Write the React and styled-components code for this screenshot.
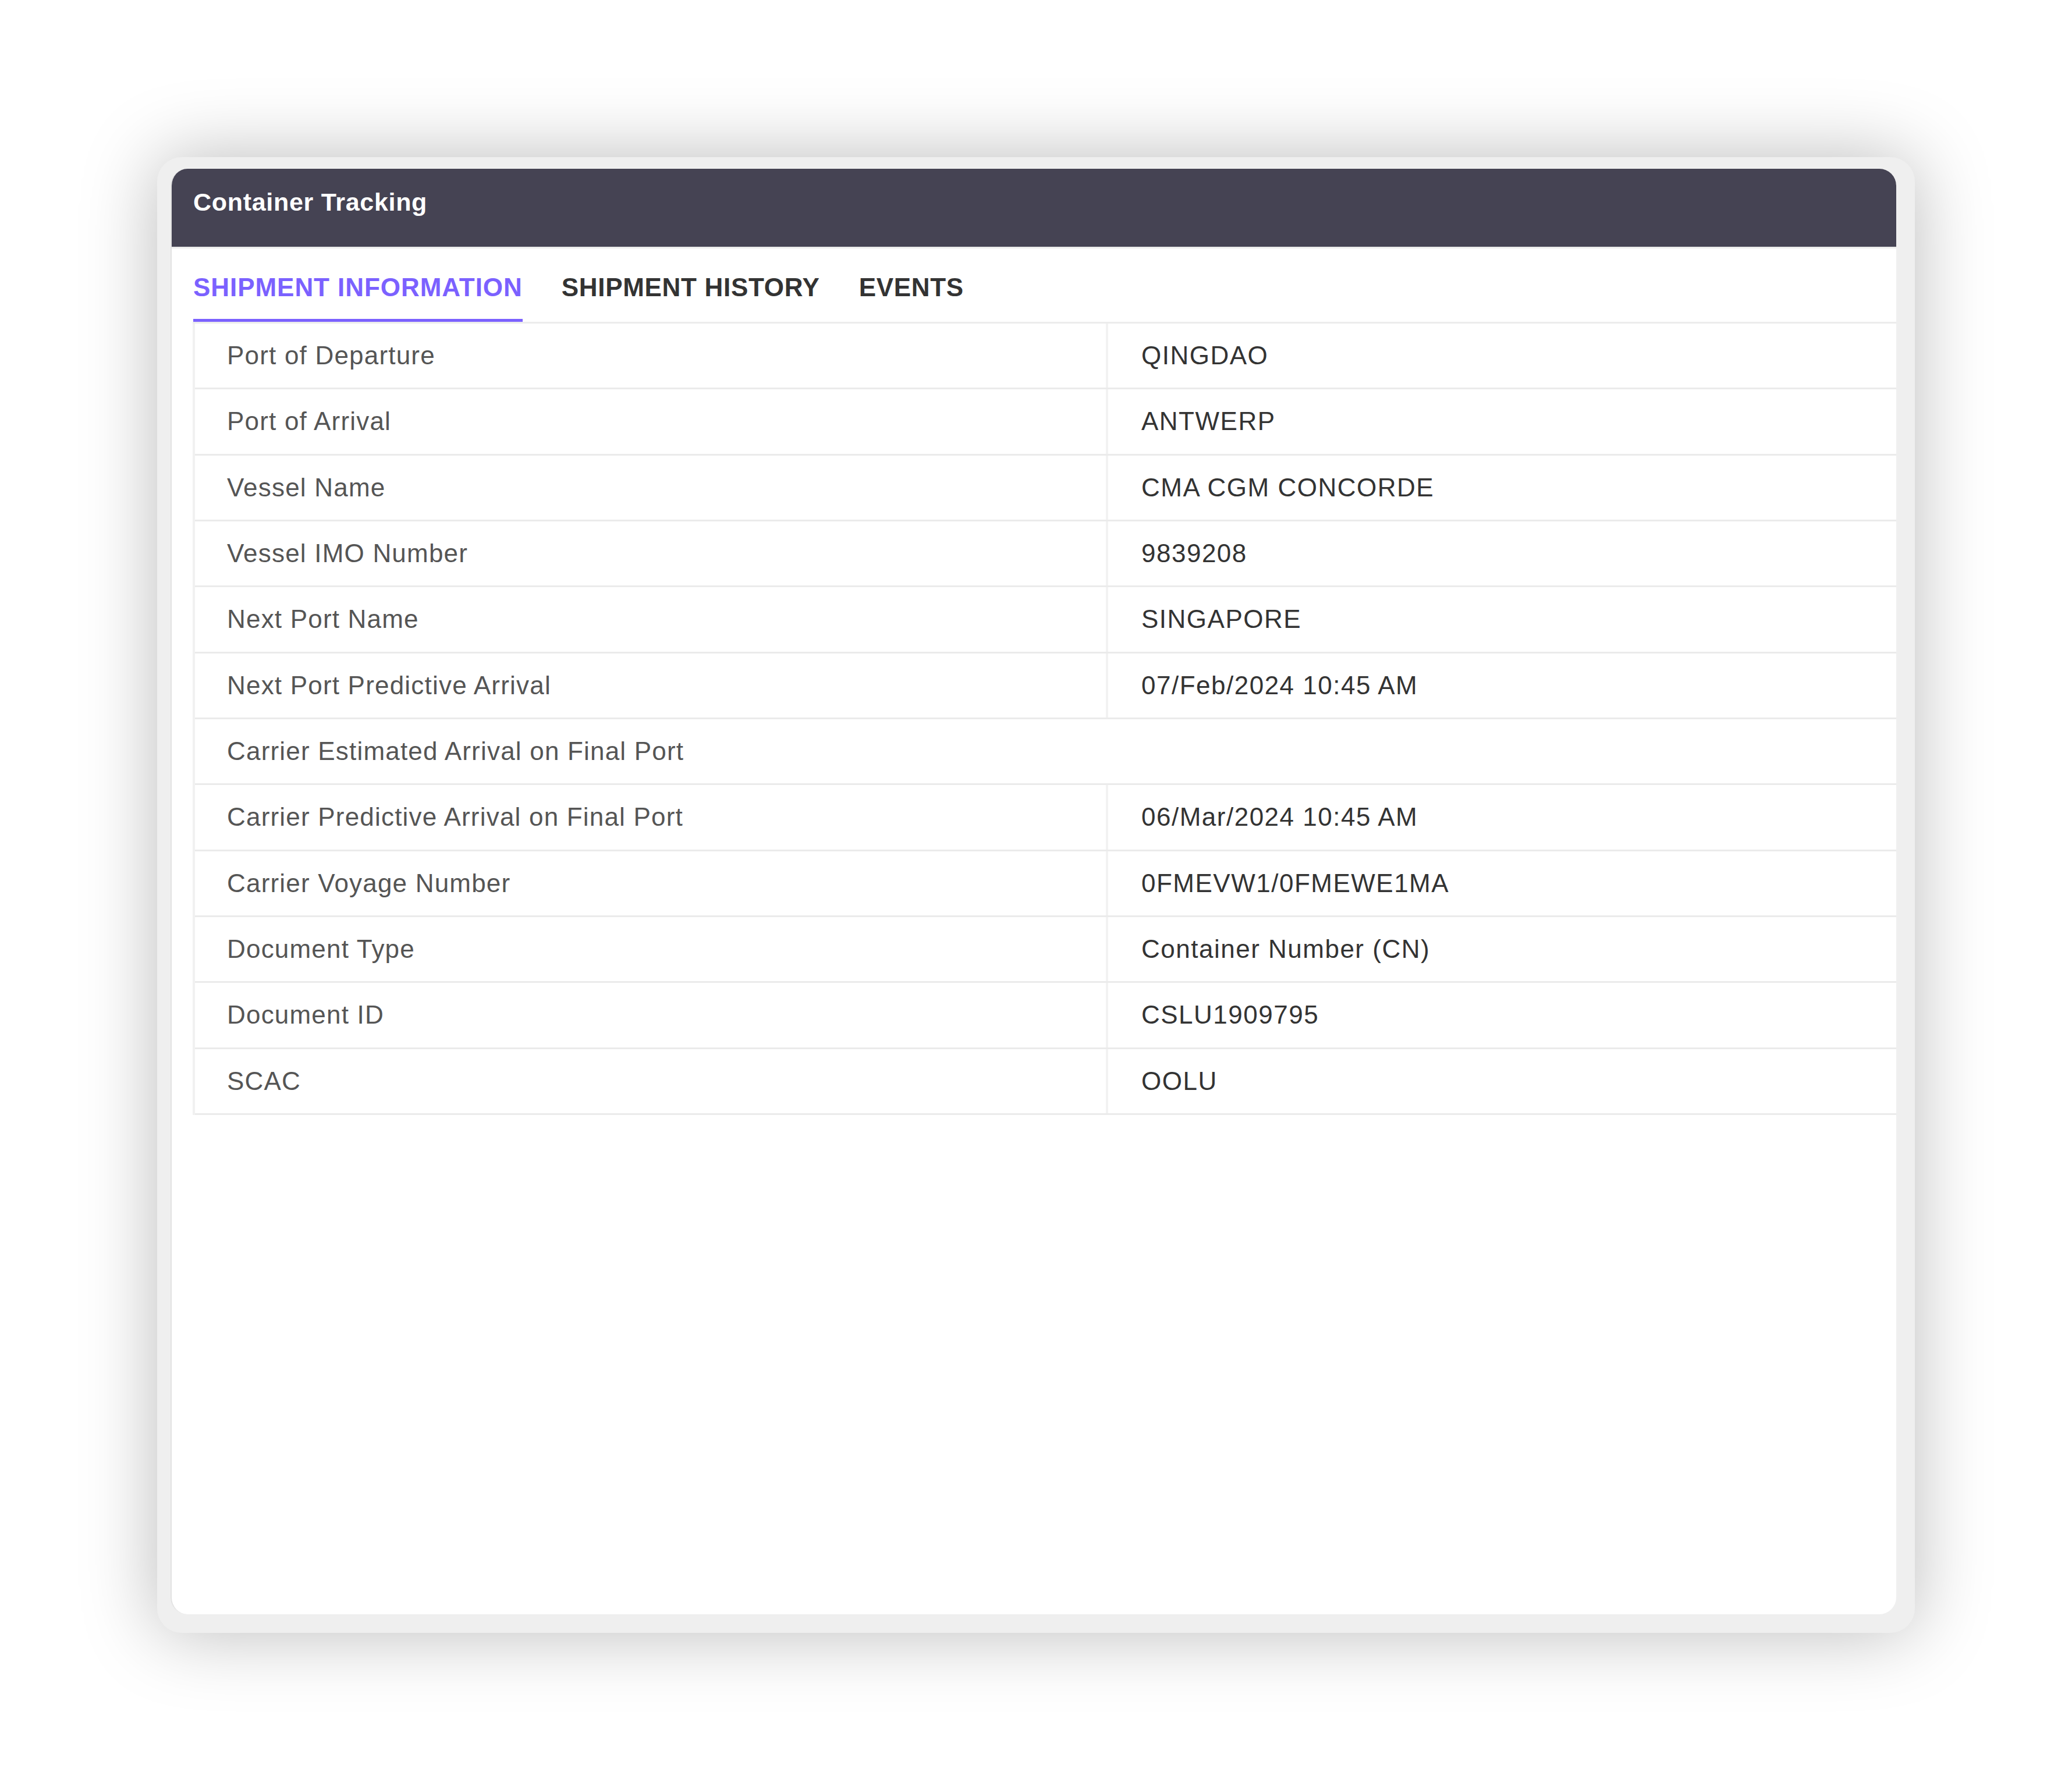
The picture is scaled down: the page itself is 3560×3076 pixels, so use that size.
import React from "react";
import styled, { createGlobalStyle } from "styled-components";

const GlobalStyle = createGlobalStyle`
  html, body {
    margin: 0;
    padding: 0;
    background: #ffffff;
    font-family: "Liberation Sans", Arial, sans-serif;
  }
  * { box-sizing: border-box; }
`;

const Page = styled.div`
  width: 3560px;
  min-height: 3076px;
  padding: 270px;
  background: #ffffff;
`;

const Frame = styled.div`
  width: 3020px;
  height: 2536px;
  background: #efefef;
  border-radius: 42px;
  box-shadow: 0 0 130px rgba(0, 0, 0, 0.27);
  padding: 20px 32px 32px 23px;
  display: flex;
`;

const Card = styled.section`
  flex: 1;
  display: flex;
  flex-direction: column;
  background: #ffffff;
  border-radius: 29px;
  border-left: 2px solid #e2e2e2;
  overflow: hidden;
`;

const Header = styled.header`
  height: 137px;
  padding: 36px 37px 0;
  background: #454353;
  border-bottom: 3px solid #ececec;
  color: #ffffff;
  font-size: 43px;
  line-height: 43px;
  font-weight: 700;
  letter-spacing: 0.7px;
`;

const Body = styled.div`
  margin-left: 36px;
  display: flex;
  flex-direction: column;
`;

const TabBar = styled.nav`
  display: flex;
  gap: 67px;
  padding-left: 1px;
  border-bottom: 3px solid #ececec;
`;

const Tab = styled.div`
  padding: 45px 0 32px;
  font-size: 44px;
  line-height: 44px;
  font-weight: 700;
  letter-spacing: ${(p) => (p.$active ? "0.95px" : "0.7px")};
  color: ${(p) => (p.$active ? "#7b61ff" : "#333333")};
  border-bottom: 5px solid ${(p) => (p.$active ? "#7b61ff" : "transparent")};
`;

const Table = styled.div`
  display: flex;
  flex-direction: column;
  border-left: 4px solid #f1f1f1;
`;

const Row = styled.div`
  display: grid;
  grid-template-columns: 1565px 1fr;
  height: 113.33px;
  border-bottom: 3px solid #ebebeb;
`;

const Label = styled.div`
  display: flex;
  align-items: center;
  padding-left: 55px;
  font-size: 44px;
  line-height: 44px;
  letter-spacing: 1.2px;
  color: #555555;
`;

const Value = styled.div`
  display: flex;
  align-items: center;
  padding-left: 57px;
  border-left: 4px solid ${(p) => (p.$noDivider ? "transparent" : "#f2f2f2")};
  font-size: 44px;
  line-height: 44px;
  letter-spacing: 1.5px;
  color: #333333;
`;

const rows = [
  ["Port of Departure", "QINGDAO"],
  ["Port of Arrival", "ANTWERP"],
  ["Vessel Name", "CMA CGM CONCORDE"],
  ["Vessel IMO Number", "9839208"],
  ["Next Port Name", "SINGAPORE"],
  ["Next Port Predictive Arrival", "07/Feb/2024 10:45 AM"],
  ["Carrier Estimated Arrival on Final Port", ""],
  ["Carrier Predictive Arrival on Final Port", "06/Mar/2024 10:45 AM"],
  ["Carrier Voyage Number", "0FMEVW1/0FMEWE1MA"],
  ["Document Type", "Container Number (CN)"],
  ["Document ID", "CSLU1909795"],
  ["SCAC", "OOLU"],
];

export default function App() {
  return (
    <>
      <GlobalStyle />
      <Page>
        <Frame>
          <Card>
            <Header>Container Tracking</Header>
            <Body>
              <TabBar>
                <Tab $active>SHIPMENT INFORMATION</Tab>
                <Tab>SHIPMENT HISTORY</Tab>
                <Tab>EVENTS</Tab>
              </TabBar>
              <Table>
                {rows.map(([label, value]) => (
                  <Row key={label}>
                    <Label>{label}</Label>
                    <Value $noDivider={!value}>{value}</Value>
                  </Row>
                ))}
              </Table>
            </Body>
          </Card>
        </Frame>
      </Page>
    </>
  );
}
